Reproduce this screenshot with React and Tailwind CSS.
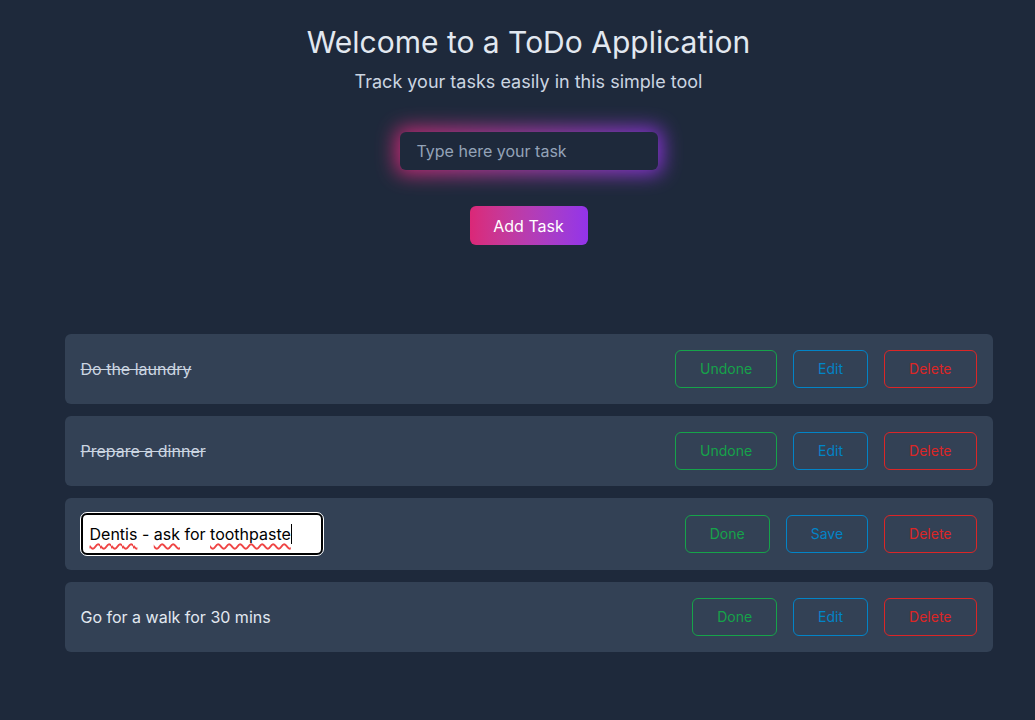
import React from "react";

const font = { fontFamily: "Inter, 'Noto Sans', sans-serif" };

function Btn({ color, children }) {
  const cls = {
    green: "border-[#16a34a] text-[#16a34a]",
    blue: "border-[#0284c7] text-[#0284c7]",
    red: "border-[#dc2626] text-[#dc2626]",
  }[color];
  return (
    <button className={`h-[38px] px-6 rounded-md border text-sm leading-5 bg-transparent ${cls}`}>
      {children}
    </button>
  );
}

function Card({ children, tall }) {
  return (
    <div className={`w-[928px] ${tall ? "h-[72px]" : "h-[70px]"} bg-[#334155] rounded-md flex items-center justify-between pl-4 pr-4`}>
      {children}
    </div>
  );
}

const wavy = "underline decoration-wavy decoration-[#ef4444] decoration-[1.5px] underline-offset-[3px]";

export default function App() {
  return (
    <div className="min-h-[720px] bg-[#1e293b] pl-[22px] text-[#e2e8f0]" style={font}>
      <div className="flex flex-col items-center pt-6">
        <h1 className="text-[30px] leading-9 text-[#e2e8f0]">Welcome to a ToDo Application</h1>
        <p className="mt-2 text-lg leading-7 text-[#cbd5e1]">Track your tasks easily in this simple tool</p>
        <div className="mt-9 relative w-[258px] h-[38px]">
          <div className="absolute -inset-[4px] rounded-lg bg-gradient-to-r from-[#db2777] to-[#9333ea] blur-[10px] opacity-90"></div>
          <div className="relative w-full h-full rounded-md bg-[#1e293b] flex items-center px-[17px] text-base text-[#94a3b8]">
            Type here your task
          </div>
        </div>
        <button className="mt-9 w-[118px] h-[39px] rounded-md bg-gradient-to-r from-[#db2777] to-[#9333ea] text-base text-white">
          Add Task
        </button>
        <div className="mt-[89px] flex flex-col gap-3">
          <Card>
            <span className="text-base line-through text-[#cbd5e1]">Do the laundry</span>
            <div className="flex gap-4">
              <Btn color="green">Undone</Btn>
              <Btn color="blue">Edit</Btn>
              <Btn color="red">Delete</Btn>
            </div>
          </Card>
          <Card>
            <span className="text-base line-through text-[#cbd5e1]">Prepare a dinner</span>
            <div className="flex gap-4">
              <Btn color="green">Undone</Btn>
              <Btn color="blue">Edit</Btn>
              <Btn color="red">Delete</Btn>
            </div>
          </Card>
          <Card tall>
            <div className="w-[242px] h-[42px] rounded-[6px] bg-white border-2 border-black outline outline-1 outline-white flex items-center px-[7px] text-base text-black">
              <span className={wavy}>Dentis</span>
              <span className="whitespace-pre"> - </span>
              <span className={wavy}>ask</span>
              <span className="whitespace-pre"> for </span>
              <span className={wavy}>toothpaste</span>
              <span className="inline-block w-px h-[20px] bg-black"></span>
            </div>
            <div className="flex gap-4">
              <Btn color="green">Done</Btn>
              <Btn color="blue">Save</Btn>
              <Btn color="red">Delete</Btn>
            </div>
          </Card>
          <Card>
            <span className="text-base text-[#e2e8f0]">Go for a walk for 30 mins</span>
            <div className="flex gap-4">
              <Btn color="green">Done</Btn>
              <Btn color="blue">Edit</Btn>
              <Btn color="red">Delete</Btn>
            </div>
          </Card>
        </div>
      </div>
    </div>
  );
}
